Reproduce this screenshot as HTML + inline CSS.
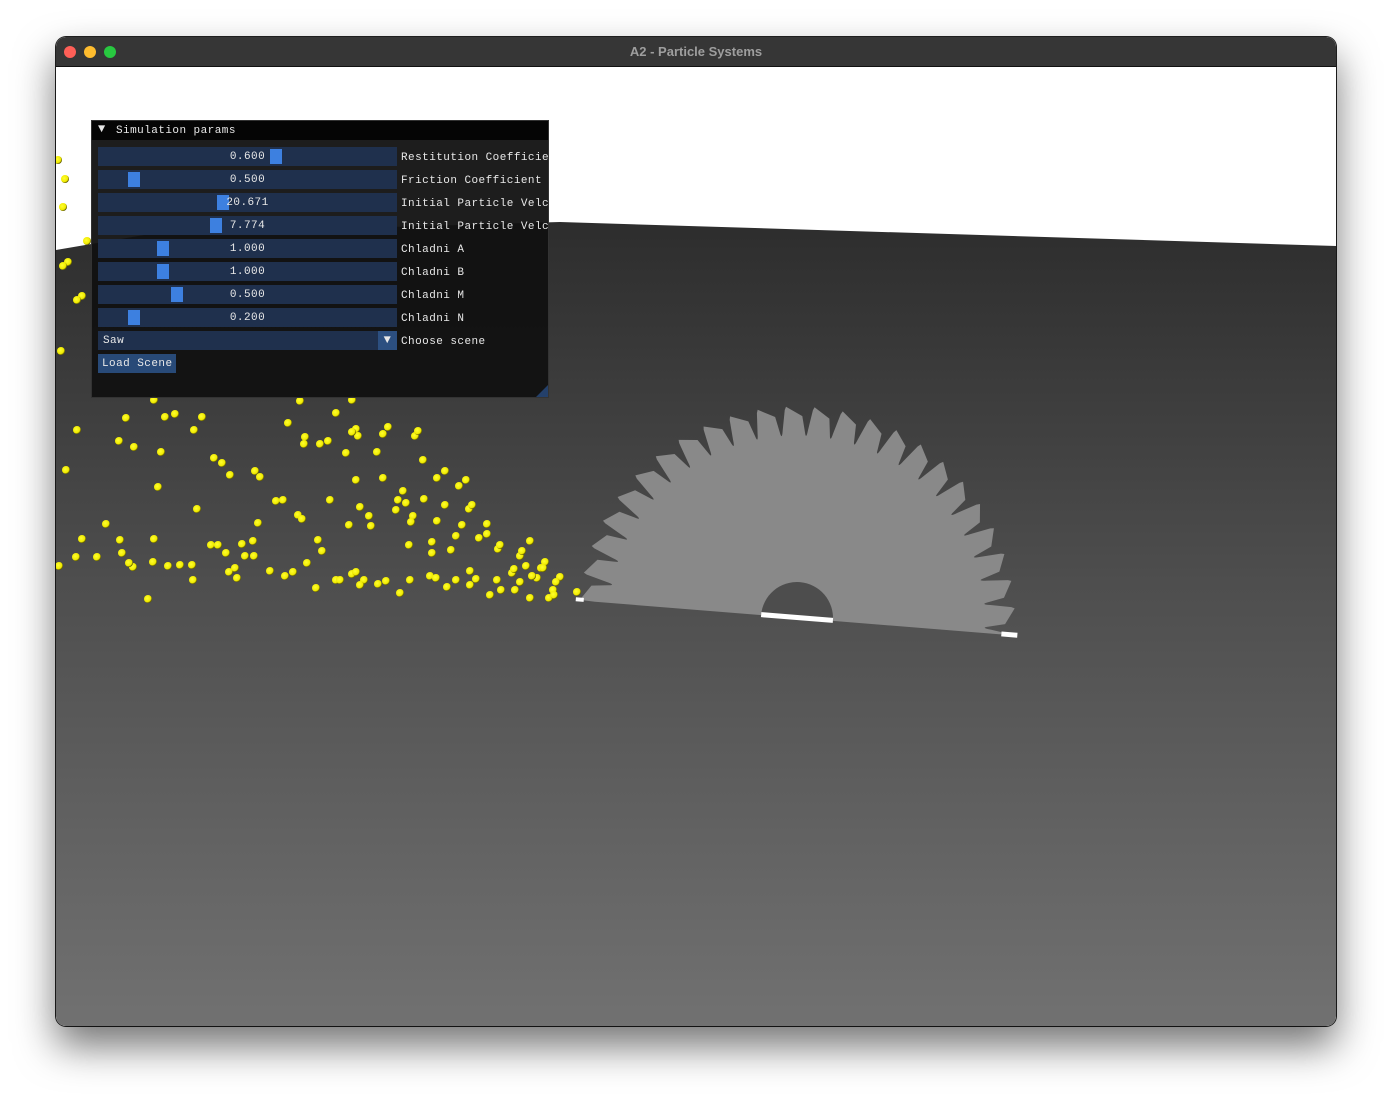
<!DOCTYPE html>
<html><head><meta charset="utf-8"><style>
html,body{margin:0;padding:0;background:#fff;width:1392px;height:1100px;overflow:hidden}
#win{position:absolute;left:56px;top:37px;width:1280px;height:989px;border-radius:10px;overflow:hidden;box-shadow:0 20px 40px rgba(0,0,0,.55),0 0 0 1px #222;background:#fff}
#tb{position:absolute;left:0;top:0;width:1280px;height:29px;background:#363636;border-bottom:1px solid #111}
#tb .t{position:absolute;left:0;width:100%;top:7px;text-align:center;font:bold 13px "Liberation Sans",sans-serif;color:#9e9e9e}
.dot{position:absolute;top:9px;width:12px;height:12px;border-radius:50%}
svg{position:absolute;left:0;top:0}
#panel{position:absolute;left:91px;top:120px;width:458px;height:278px;background:rgba(17,17,17,.95);border:1px solid #333;box-sizing:border-box;font:11px "Liberation Mono",monospace;letter-spacing:0.45px;color:#e8e8e8;overflow:hidden}
#panel .hd{position:absolute;left:0;top:0;width:100%;height:19px;background:#050505}
.row{position:absolute;left:6px;width:299px;height:19px;background:#1f304d}
.grab{position:absolute;top:2px;width:12px;height:15px;background:#3d80e0}
.val{position:absolute;left:0;width:299px;text-align:center;top:4px}
.lab{position:absolute;left:309px;white-space:pre}
</style></head><body>
<div id="win">
<svg width="1280" height="989" viewBox="56 37 1280 989">
<defs>
<linearGradient id="fl" x1="0" y1="0" x2="0" y2="1" gradientUnits="objectBoundingBox"><stop offset="0" stop-color="#2d2d2d"/><stop offset="0.45" stop-color="#4e4e4e"/><stop offset="1" stop-color="#717171"/></linearGradient>
<radialGradient id="yb" cx="0.4" cy="0.4" r="0.6"><stop offset="0" stop-color="#ffff30"/><stop offset="0.75" stop-color="#f0ea00"/><stop offset="1" stop-color="#5a5500"/></radialGradient>
</defs>
<rect x="56" y="37" width="1280" height="989" fill="#fff"/>
<polygon points="56,250 150,234 560,222 1336,246 1336,1026 56,1026" fill="url(#fl)"/>
<g id="saw"></g>
<g id="parts"></g>
</svg>
<div id="tb"><div class="dot" style="left:8px;background:#fe5f57"></div><div class="dot" style="left:28px;background:#febc2e"></div><div class="dot" style="left:48px;background:#28c840"></div><div class="t">A2 - Particle Systems</div></div>
</div>
<div id="panel">
<div class="hd"><span style="position:absolute;left:6px;top:1px;font-size:12px">▼</span><span style="position:absolute;left:24px;top:4px">Simulation params</span></div>
<div class="row" style="top:26px"><div class="grab" style="left:172px"></div><div class="val">0.600</div></div><div class="lab" style="top:31px">Restitution Coefficie</div>
<div class="row" style="top:49px"><div class="grab" style="left:30px"></div><div class="val">0.500</div></div><div class="lab" style="top:54px">Friction Coefficient</div>
<div class="row" style="top:72px"><div class="grab" style="left:119px"></div><div class="val">20.671</div></div><div class="lab" style="top:77px">Initial Particle Velc</div>
<div class="row" style="top:95px"><div class="grab" style="left:112px"></div><div class="val">7.774</div></div><div class="lab" style="top:100px">Initial Particle Velc</div>
<div class="row" style="top:118px"><div class="grab" style="left:59px"></div><div class="val">1.000</div></div><div class="lab" style="top:123px">Chladni A</div>
<div class="row" style="top:141px"><div class="grab" style="left:59px"></div><div class="val">1.000</div></div><div class="lab" style="top:146px">Chladni B</div>
<div class="row" style="top:164px"><div class="grab" style="left:73px"></div><div class="val">0.500</div></div><div class="lab" style="top:169px">Chladni M</div>
<div class="row" style="top:187px"><div class="grab" style="left:30px"></div><div class="val">0.200</div></div><div class="lab" style="top:192px">Chladni N</div>
<div class="row" style="top:210px"><span style="position:absolute;left:5px;top:4px">Saw</span><div style="position:absolute;right:0;top:0;width:19px;height:19px;background:#2c4f80;text-align:center;font-size:12px;line-height:19px">▼</div></div><div class="lab" style="top:215px">Choose scene</div>
<div style="position:absolute;left:6px;top:233px;width:78px;height:19px;background:#284a78"><span style="position:absolute;left:4px;top:4px">Load Scene</span></div>
<div style="position:absolute;right:0;bottom:0;width:0;height:0;border-left:12px solid transparent;border-bottom:12px solid #24406a"></div>
</div>
<script>
(function(){
var cx=797,cy=618,R=218,ry=0.97,n=24,d="";
var step=Math.PI/n;
function P(a,r){return (cx+Math.cos(a)*r).toFixed(1)+","+(cy-Math.sin(a)*r*ry).toFixed(1);}
d="M"+P(Math.PI,R*0.93);
for(var i=n;i>0;i--){
 var a=i*step;
 d+=" L"+P(a-step*0.02,R);
 d+=" L"+P(a-step*0.6,R*0.955);
 d+=" L"+P(a-step*0.72,R*0.88);
 d+=" Q"+P(a-step*0.78,R*0.84)+" "+P(a-step*0.84,R*0.89);
 d+=" L"+P(a-step*0.97,R*0.985);
}
d+=" L"+P(0,R*0.93)+" Z";
var g=document.getElementById("saw");
g.setAttribute("transform","rotate(4.6 "+cx+" "+cy+")");
g.innerHTML='<path d="'+d+'" fill="#898989"/>'+
'<path d="M'+(cx-36)+','+cy+' A36,36 0 0 1 '+(cx+36)+','+cy+' Z" fill="#4d4d4d"/>'+
'<rect x="'+(cx-36)+'" y="'+(cy-3)+'" width="72" height="5" fill="#fff"/>'+
'<rect x="'+(cx+205)+'" y="'+(cy-3)+'" width="16" height="5" fill="#fff"/>'+
'<rect x="'+(cx-222)+'" y="'+(cy-3)+'" width="8" height="4" fill="#fff"/>';
var pts=[[58,160],[65,179],[63,207],[87,241],[68,262],[63,266],[82,296],[77,300],[61,351],[126,418],[165,417],[175,414],[202,417],[77,430],[288,423],[336,413],[119,441],[134,447],[161,452],[194,430],[214,458],[222,463],[230,475],[255,471],[260,477],[66,470],[158,487],[197,509],[276,501],[283,500],[298,515],[302,519],[258,523],[211,545],[218,545],[229,572],[237,578],[245,556],[254,556],[242,544],[305,437],[304,444],[320,444],[328,441],[356,429],[358,436],[352,432],[383,434],[388,427],[415,436],[418,431],[346,453],[377,452],[356,480],[383,478],[403,491],[330,500],[360,507],[369,516],[406,503],[396,510],[413,516],[411,522],[398,500],[349,525],[371,526],[318,540],[322,551],[307,563],[293,572],[285,576],[270,571],[235,568],[253,541],[226,553],[192,565],[180,565],[168,566],[153,562],[133,567],[129,563],[122,553],[106,524],[82,539],[76,557],[97,557],[59,566],[120,540],[154,539],[423,460],[445,471],[437,478],[459,486],[466,480],[469,509],[472,505],[462,525],[487,524],[445,505],[437,521],[424,499],[409,545],[432,542],[432,553],[451,550],[456,536],[456,580],[470,571],[479,538],[487,534],[498,549],[500,545],[520,556],[522,551],[530,541],[545,562],[541,568],[537,578],[560,577],[556,582],[553,590],[549,598],[577,592],[532,576],[520,582],[512,573],[514,569],[497,580],[490,595],[470,585],[476,579],[447,587],[430,576],[436,578],[410,580],[400,593],[386,581],[378,584],[364,580],[360,585],[352,574],[356,572],[336,580],[316,588],[340,580],[501,590],[515,590],[530,598],[554,595],[526,566],[543,568],[193,580],[148,599],[154,400],[300,401],[352,400]];
var s="";
pts.forEach(function(p){s+='<circle cx="'+p[0]+'" cy="'+p[1]+'" r="4" fill="url(#yb)"/>';});
document.getElementById("parts").innerHTML=s;
})();
</script>
</body></html>
